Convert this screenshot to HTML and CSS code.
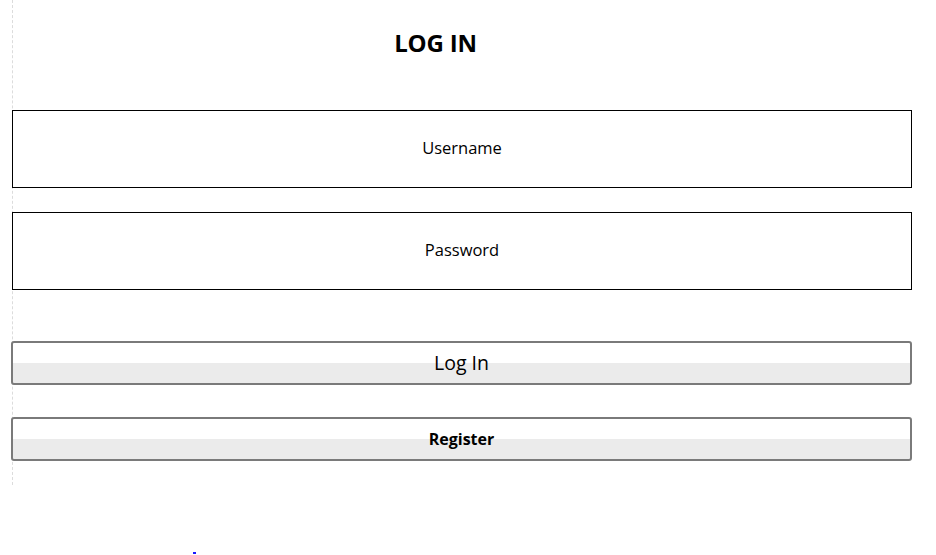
FILE: index.html
```html
<!DOCTYPE html>
<html>
<head>
<meta charset="utf-8">
<link rel="stylesheet" href="styles.css">
</head>
<body>
<div class="page">
  <div class="form">
    <h1 class="title">LOG IN</h1>
    <div class="field">Username</div>
    <div class="field field-second">Password</div>
    <button class="btn btn-login">Log In</button>
    <button class="btn btn-register">Register</button>
  </div>
  <div class="footer"><span class="dot"></span></div>
</div>
</body>
</html>
```
FILE: styles.css
```css
html, body {
  margin: 0;
  padding: 0;
  background: #fff;
}
body {
  font-family: "Open Sans", "Liberation Sans", sans-serif;
  color: #000;
  width: 936px;
  height: 555px;
  overflow: hidden;
}
.page {
  display: flex;
  flex-direction: column;
  height: 555px;
}
.form {
  margin-left: 12px;
  width: 900px;
  height: 485px;
  box-sizing: border-box;
  border-left: 1px dashed #dcdcdc;
  display: flex;
  flex-direction: column;
}
.title {
  margin: 28px 0 0 0;
  height: 30px;
  line-height: 30px;
  font-size: 24px;
  font-weight: 700;
  text-align: center;
  padding-right: 54px;
  letter-spacing: -0.2px;
}
.field {
  margin-top: 52px;
  margin-left: -1px;
  height: 78px;
  border: 1px solid #000;
  box-sizing: border-box;
  display: flex;
  align-items: center;
  justify-content: center;
  font-size: 16.5px;
  padding-bottom: 3px;
}
.field-second {
  margin-top: 24px;
  height: 78px;
}
.btn {
  margin-left: -2px;
  width: 901px;
  box-sizing: border-box;
  border: 2px solid #7a7a7a;
  border-radius: 3px;
  background: linear-gradient(to bottom, #ffffff 0, #ffffff 50%, #ebebeb 50%, #ebebeb 100%);
  font-family: "Open Sans", "Liberation Sans", sans-serif;
  color: #000;
  padding: 0;
  display: flex;
  align-items: center;
  justify-content: center;
}
.btn-login {
  margin-top: 51px;
  height: 44px;
  font-size: 19.5px;
  padding-bottom: 2px;
}
.btn-register {
  margin-top: 32px;
  height: 44px;
  font-size: 16px;
  font-weight: 700;
}
.footer {
  flex: 1;
  position: relative;
}
.dot {
  position: absolute;
  left: 193px;
  top: 67px;
  width: 3px;
  height: 2px;
  background: #1a1aff;
}
```
